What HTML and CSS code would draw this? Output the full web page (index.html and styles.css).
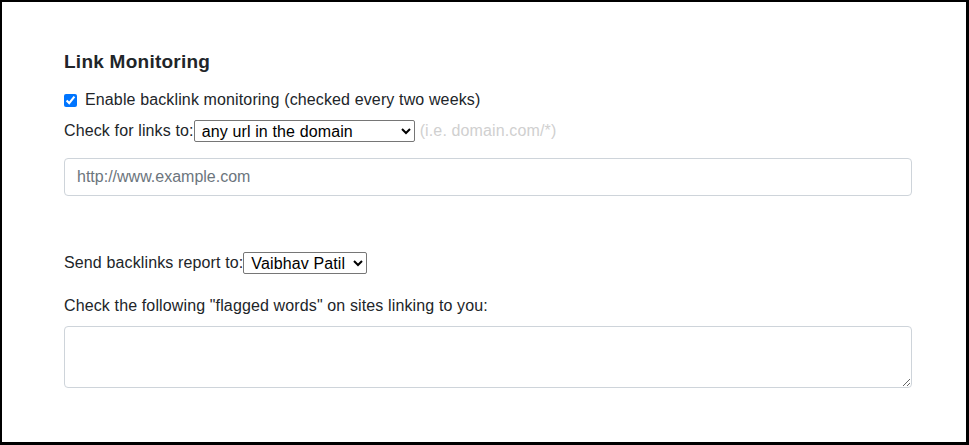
FILE: index.html
```html
<!DOCTYPE html>
<html lang="en">

<head>
  <meta charset="UTF-8">
  <meta name="viewport" content="width=device-width, initial-scale=1.0">
  <title>Link Monitoring</title>
  <link rel="stylesheet" href="styles.css">
</head>

<body>
  <div class="frame">
    <div class="section">
      <h3 class="title">Link Monitoring</h3>
      <div class="row">
        <label class="check">
          <input type="checkbox" checked />
          Enable backlink monitoring (checked every two weeks)
        </label>
      </div>
      <div class="row">
        <label for="scope">Check for links to:</label><select id="scope" class="scope">
          <option>any url in the domain</option>
          <option>this exact url</option>
        </select>
        <span class="hint">(i.e. domain.com/*)</span>
      </div>
      <input type="text" class="form-control url" placeholder="http://www.example.com" />

      <div class="row report">
        <label for="report">Send backlinks report to:</label><select id="report" class="person">
          <option>Vaibhav Patil</option>
        </select>
      </div>
      <label class="words-label" for="words">Check the following "flagged words" on sites linking to you:</label>
      <textarea id="words" class="form-control" rows="2"></textarea>
    </div>
  </div>
</body>

</html>
```

FILE: styles.css
```css
html, body {
  margin: 0px;
  height: 100%;
}

body {
  font-family: Arial, "Liberation Sans", sans-serif;
  font-size: 16px;
  letter-spacing: 0.13px;
  color: #212529;
  background: #fff;
}

.frame {
  box-sizing: border-box;
  height: 445px;
  border: 2px solid #000;
  border-right-width: 3px;
  border-bottom-width: 3px;
}

.section {
  padding: 48px 54px 0 62px;
}

.title {
  margin: 0 0 12px;
  font-size: 19px;
  font-weight: bold;
  line-height: 24px;
  letter-spacing: 0.25px;
}

.row {
  display: flex;
  align-items: center;
  height: 28px;
  margin-bottom: 3px;
}

.row + .row {
  margin-top: 1px;
}

.check {
  display: flex;
  align-items: center;
}

.check input {
  width: 13px;
  height: 13px;
  margin: 0 8px 0 0;
  accent-color: #0075ff;
}

select {
  font-family: Arial, "Liberation Sans", sans-serif;
  font-size: 16px;
  letter-spacing: 0.13px;
  color: #000;
  height: 22px;
  padding: 0 0 0 3px;
  border: 1px solid #767676;
  border-radius: 2px;
  background: #fff;
}

.scope {
  width: 221px;
}

.person {
  width: 124px;
}

.hint {
  margin-left: 5px;
  color: #d0d0d0;
}

.form-control {
  display: block;
  box-sizing: border-box;
  width: 100%;
  padding: 6px 12px;
  font-family: Arial, "Liberation Sans", sans-serif;
  font-size: 16px;
  line-height: 24px;
  color: #495057;
  border: 1px solid #ced4da;
  border-radius: 4px;
  outline: none;
}

.form-control::placeholder {
  color: #6c757d;
}

.url {
  height: 38px;
  margin-top: 13px;
}

.report {
  margin-top: 53px;
}

.words-label {
  display: block;
  margin-top: 17px;
  line-height: 24px;
}

textarea.form-control {
  height: 62px;
  margin-top: 8px;
  resize: vertical;
}
```
